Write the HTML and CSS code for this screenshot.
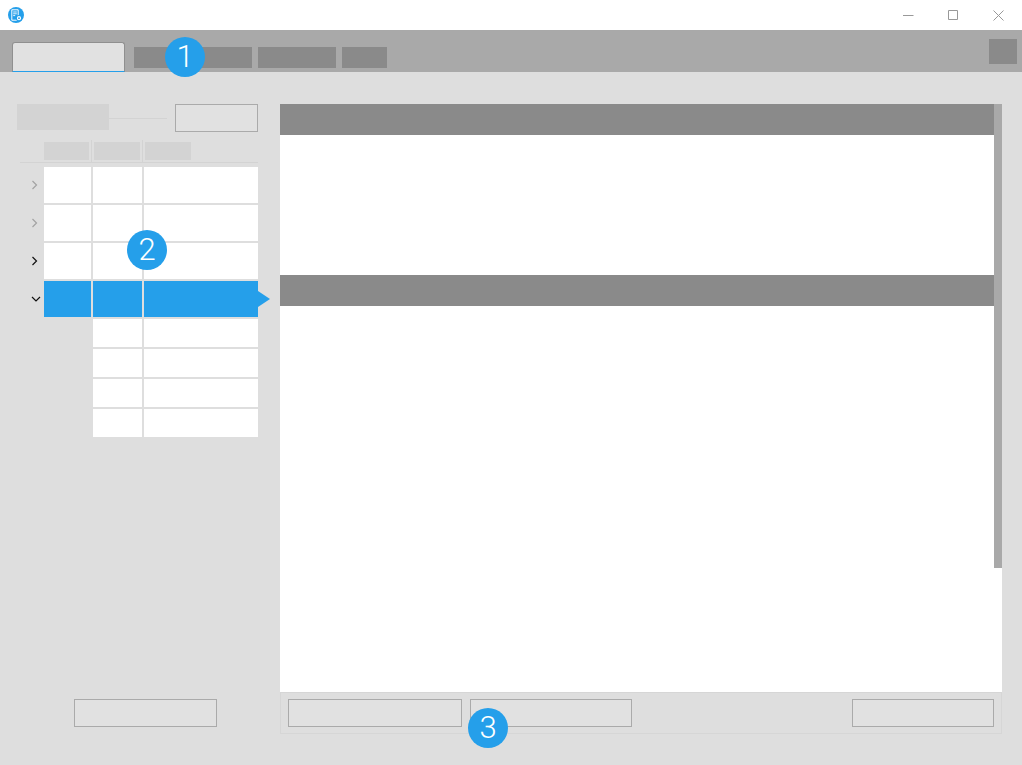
FILE: index.html
```html
<!DOCTYPE html>
<html lang="en">
<head>
    <meta charset="UTF-8">
    <meta name="viewport" content="width=device-width, initial-scale=1.0">
    <title>Settings</title>
    <link rel="stylesheet" href="styles.css">
</head>
<body>
    <div class="titlebar">
        <svg class="app-icon" width="16" height="16" viewBox="0 0 16 16">
            <circle cx="8" cy="8" r="8" fill="#259fea"/>
            <path d="M3.8 2.8h6.4v10.4h-6.4z" fill="none" stroke="#fff" stroke-width="1"/>
            <path d="M5.2 5h3.6M5.2 6.8h3.6M5.2 8.6h2" stroke="#fff" stroke-width=".9"/>
            <circle cx="11" cy="11.2" r="3.1" fill="#259fea"/>
            <circle cx="11" cy="11.2" r="1.5" fill="none" stroke="#fff" stroke-width="1.2"/>
        </svg>
        <div class="win-controls">
            <svg class="win-btn" width="11" height="11" viewBox="0 0 11 11"><path d="M0 5.5h10.5" stroke="#999" fill="none"/></svg>
            <svg class="win-btn" width="11" height="11" viewBox="0 0 11 11"><path d="M.5 .5h9v9h-9z" stroke="#999" fill="none"/></svg>
            <svg class="win-btn" width="11" height="11" viewBox="0 0 11 11"><path d="M.5 .5l10 10M10.5 .5l-10 10" stroke="#999" fill="none"/></svg>
        </div>
    </div>

    <div class="toolbar">
        <div class="tab-active"></div>
        <div class="tab tab-1"></div>
        <div class="tab tab-2"></div>
        <div class="tab tab-3"></div>
        <div class="toolbar-square"></div>
        <span class="badge badge-1">1</span>
    </div>

    <div class="content">
        <div class="sidebar">
            <div class="search-row">
                <div class="search-label"></div>
                <div class="search-line"></div>
                <div class="btn btn-search"></div>
            </div>

            <div class="list-head">
                <div class="head-col head-a"><span></span></div>
                <div class="head-col head-b"><span></span></div>
                <div class="head-col head-c"><span></span></div>
            </div>

            <div class="list">
                <div class="row">
                    <svg class="chev" width="8" height="10" viewBox="0 0 8 10"><path d="M1.5 1l4 4-4 4" stroke="#a3a3a3" stroke-width="1.2" fill="none"/></svg>
                    <div class="cell"></div><div class="cell"></div><div class="cell"></div>
                </div>
                <div class="row">
                    <svg class="chev" width="8" height="10" viewBox="0 0 8 10"><path d="M1.5 1l4 4-4 4" stroke="#a3a3a3" stroke-width="1.2" fill="none"/></svg>
                    <div class="cell"></div><div class="cell"></div><div class="cell"></div>
                </div>
                <div class="row">
                    <svg class="chev" width="8" height="10" viewBox="0 0 8 10"><path d="M1.5 1l4 4-4 4" stroke="#111" stroke-width="1.2" fill="none"/></svg>
                    <div class="cell"></div><div class="cell"></div><div class="cell"></div>
                </div>
                <div class="row row-selected">
                    <svg class="chev chev-down" width="10" height="8" viewBox="0 0 10 8"><path d="M1 2l4 4 4-4" stroke="#111" stroke-width="1.2" fill="none"/></svg>
                    <div class="cell"></div><div class="cell"></div><div class="cell"></div>
                    <div class="row-arrow"></div>
                </div>
                <div class="row row-sub"><div class="cell"></div><div class="cell"></div></div>
                <div class="row row-sub"><div class="cell"></div><div class="cell"></div></div>
                <div class="row row-sub"><div class="cell"></div><div class="cell"></div></div>
                <div class="row row-sub"><div class="cell"></div><div class="cell"></div></div>
            </div>
            <span class="badge badge-2">2</span>

            <div class="sidebar-foot">
                <div class="btn btn-add"></div>
            </div>
        </div>

        <div class="main">
            <div class="panel">
                <div class="panel-body">
                    <div class="section-bar"></div>
                    <div class="section-small"></div>
                    <div class="section-bar"></div>
                </div>
                <div class="scrollbar"></div>
            </div>
            <div class="panel-foot">
                <div class="btn btn-foot-1"></div>
                <div class="btn btn-foot-2"></div>
                <div class="btn btn-foot-3"></div>
                <span class="badge badge-3">3</span>
            </div>
        </div>
    </div>
</body>
</html>
```

FILE: styles.css
```css
* {
    box-sizing: border-box;
}

body {
    margin: 0;
    height: 765px;
    overflow: hidden;
    background: #dedede;
    font-family: Roboto, sans-serif;
}

.titlebar {
    height: 30px;
    background: #fff;
    display: flex;
    align-items: center;
    justify-content: space-between;
    padding: 0 18px 0 8px;
}

.app-icon {
    display: block;
}

.win-controls {
    display: flex;
    gap: 34px;
}

.win-btn {
    display: block;
}

.toolbar {
    position: relative;
    height: 42px;
    background: #a9a9a9;
    display: flex;
    align-items: flex-start;
    padding: 12px 5px 0 12px;
}

.tab-active {
    width: 113px;
    height: 30px;
    background: #e1e1e1;
    border: 1px solid #8f8f8f;
    border-bottom: 1px solid #259fea;
    border-radius: 3px 3px 0 0;
    margin-right: 9px;
}

.tab {
    height: 21px;
    margin: 5px 6px 0 0;
    background: #8a8a8a;
}

.tab-1 { width: 118px; }
.tab-2 { width: 78px; }
.tab-3 { width: 45px; }

.toolbar-square {
    width: 28px;
    height: 25px;
    margin: -3px 0 0 auto;
    background: #8a8a8a;
}

.badge {
    position: absolute;
    width: 40px;
    height: 40px;
    border-radius: 50%;
    background: #259fea;
    color: #fff;
    font-size: 31px;
    font-weight: 300;
    line-height: 40px;
    text-align: center;
}

.badge-1 { left: 165px; top: 7px; }
.badge-2 { left: 110px; top: 198px; }
.badge-3 { left: 187px; top: 15px; }

.content {
    height: 693px;
    display: flex;
    padding: 32px 20px 31px 17px;
}

.sidebar {
    position: relative;
    width: 263px;
    margin-top: -72px;
    padding-top: 72px;
    margin-bottom: -31px;
    padding-bottom: 38px;
    display: flex;
    flex-direction: column;
}

.search-row {
    width: 241px;
    height: 28px;
    display: flex;
    align-items: flex-start;
}

.search-label {
    width: 92px;
    height: 26px;
    background: #d3d3d3;
}

.search-line {
    width: 58px;
    height: 1px;
    margin-top: 14px;
    background: #d3d3d3;
}

.btn {
    height: 28px;
    background: #e1e1e1;
    border: 1px solid #aaa;
}

.btn-search {
    width: 83px;
    margin-left: 8px;
}

.list-head {
    width: 238px;
    margin: 8px 0 0 3px;
    padding-left: 24px;
    height: 23px;
    display: flex;
    border-bottom: 1px solid #d3d3d3;
}

.head-col {
    height: 22px;
    padding-top: 2px;
    border-right: 1px solid #d3d3d3;
}

.head-col span {
    display: block;
    height: 18px;
    background: #d3d3d3;
}

.head-a { width: 48px; }
.head-a span { width: 45px; }
.head-b { width: 51px; padding-left: 2px; }
.head-b span { width: 46px; }
.head-c { padding-left: 2px; border-right: 0; }
.head-c span { width: 46px; }

.list {
    margin-top: 4px;
    width: 241px;
    display: flex;
    flex-direction: column;
    gap: 2px;
}

.row {
    position: relative;
    height: 36px;
    padding-left: 27px;
    display: grid;
    grid-template-columns: 47px 49px 114px;
    gap: 2px;
}

.cell {
    background: #fff;
}

.row-sub {
    height: 28px;
}

.row-sub .cell:first-child {
    grid-column: 2;
}

.row-selected .cell {
    background: #259fea;
}

.chev {
    position: absolute;
    left: 14px;
    top: 13px;
}

.chev-down {
    left: 14px;
    top: 14px;
}

.row-arrow {
    position: absolute;
    left: 241px;
    top: 10px;
    border-left: 12px solid #259fea;
    border-top: 8px solid transparent;
    border-bottom: 8px solid transparent;
}

.sidebar-foot {
    margin-top: auto;
    padding-left: 57px;
}

.btn-add {
    width: 143px;
}

.main {
    flex: 1;
    display: flex;
    flex-direction: column;
}

.panel {
    flex: 1;
    background: #fff;
    display: flex;
}

.panel-body {
    flex: 1;
}

.section-bar {
    height: 31px;
    background: #8a8a8a;
}

.section-small {
    height: 140px;
}

.scrollbar {
    width: 8px;
    height: 464px;
    background: #a9a9a9;
}

.panel-foot {
    position: relative;
    height: 42px;
    border: 1px solid #d6d6d6;
    display: flex;
    padding: 6px 7px 0;
    gap: 8px;
}

.btn-foot-1 { width: 174px; }
.btn-foot-2 { width: 162px; }
.btn-foot-3 { width: 142px; margin-left: auto; }
```
